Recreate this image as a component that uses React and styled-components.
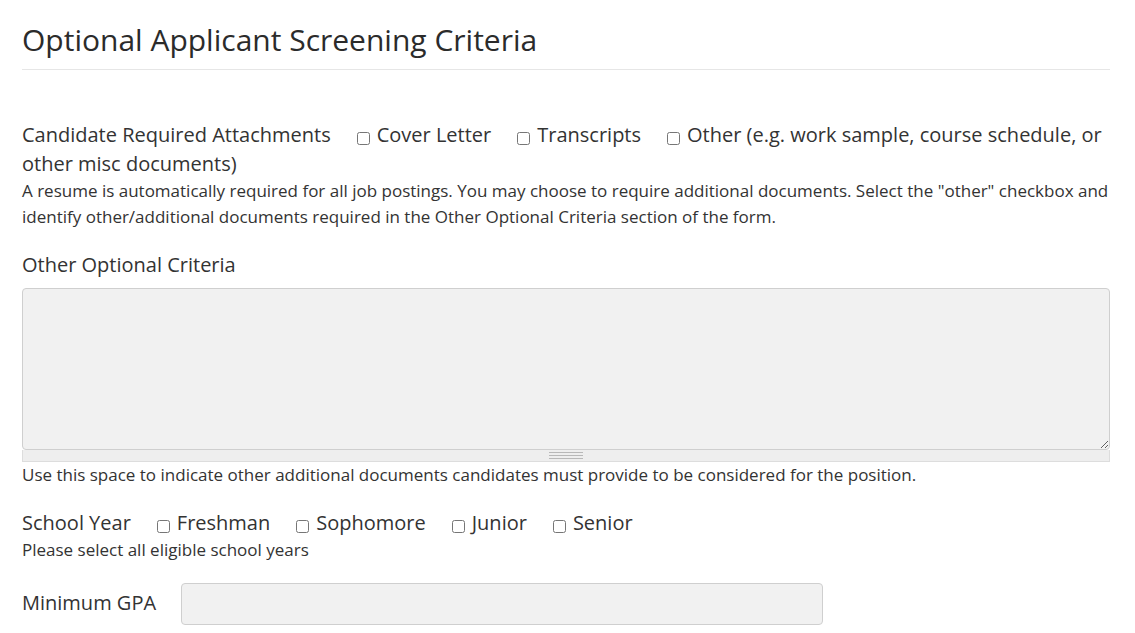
import React from 'react'
import styled, { createGlobalStyle } from 'styled-components'

const GlobalStyle = createGlobalStyle`
  body {
    margin: 0;
    background: #fff;
    font-family: "Open Sans", "Liberation Sans", sans-serif;
    color: #333;
  }
`

export default function App() {
  return (
    <Page>
      <GlobalStyle />
      <Title>Optional Applicant Screening Criteria</Title>
      <Rule />

      <FormGroup $top={50}>
        <InlineLabel>Candidate Required Attachments</InlineLabel>
        <Check label="Cover Letter" />
        <Check label="Transcripts" />
        <Check label="Other (e.g. work sample, course schedule, or other misc documents)" />
        <Help>
          A resume is automatically required for all job postings. You may choose to require
          additional documents. Select the "other" checkbox and identify other/additional
          documents required in the Other Optional Criteria section of the form.
        </Help>
      </FormGroup>

      <FormGroup>
        <BlockLabel>Other Optional Criteria</BlockLabel>
        <TextArea />
        <Grippie />
        <Help>
          Use this space to indicate other additional documents candidates must provide to be
          considered for the position.
        </Help>
      </FormGroup>

      <FormGroup>
        <InlineLabel>School Year</InlineLabel>
        <Check label="Freshman" />
        <Check label="Sophomore" />
        <Check label="Junior" />
        <Check label="Senior" />
        <Help>Please select all eligible school years</Help>
      </FormGroup>

      <FormGroup>
        <FieldRow>
          <RowLabel>Minimum GPA</RowLabel>
          <TextInput type="text" />
        </FieldRow>
      </FormGroup>
    </Page>
  )
}

function Check({ label }) {
  return (
    <CheckLabel>
      <CheckBox type="checkbox" />
      {label}
    </CheckLabel>
  )
}

const Page = styled.div`
  padding: 22px 25px 0 22px;
`
const Title = styled.h2`
  margin: 0;
  font-size: 30px;
  font-weight: 400;
  line-height: 36px;
  color: #2b2b2b;
`
const Rule = styled.hr`
  margin: 11px 0 0;
  border: 0;
  border-top: 1px solid #e6e6e6;
`
const FormGroup = styled.div`
  margin-top: ${(p) => p.$top || 20}px;
  font-size: 20px;
  line-height: 29px;
`
const InlineLabel = styled.span`
  margin-right: 23px;
`
const BlockLabel = styled.div`
  margin-bottom: 9px;
`
const CheckLabel = styled.label`
  margin-right: 23px;
`
const CheckBox = styled.input`
  width: 13px;
  height: 13px;
  margin: 0 7px 0 3px;
  vertical-align: -3px;
`
const Help = styled.div`
  font-size: 17px;
  line-height: 26px;
`
const TextArea = styled.textarea`
  display: block;
  box-sizing: border-box;
  width: 100%;
  height: 162px;
  margin: 0;
  background: #f1f1f1;
  border: 1px solid #cfcfcf;
  border-radius: 4px;
  font-family: inherit;
  font-size: 15px;
`
const Grippie = styled.div`
  position: relative;
  height: 12px;
  box-sizing: border-box;
  background: #eeeeee;
  border: 1px solid #dddddd;
  border-top: 0;
  &::after {
    content: '';
    position: absolute;
    left: 50%;
    top: 2px;
    width: 34px;
    margin-left: -17px;
    height: 5px;
    border-top: 1px solid #b8b8b8;
    border-bottom: 1px solid #b8b8b8;
    background: linear-gradient(#eee 0 1px, #b8b8b8 1px 2px, #eee 2px);
    background-size: 100% 3px;
    background-repeat: no-repeat;
    background-position: 0 1px;
  }
`
const FieldRow = styled.div`
  display: flex;
  align-items: center;
`
const RowLabel = styled.span`
  width: 159px;
  padding-bottom: 4px;
`
const TextInput = styled.input`
  box-sizing: border-box;
  width: 642px;
  height: 42px;
  background: #f1f1f1;
  border: 1px solid #cfcfcf;
  border-radius: 4px;
`
